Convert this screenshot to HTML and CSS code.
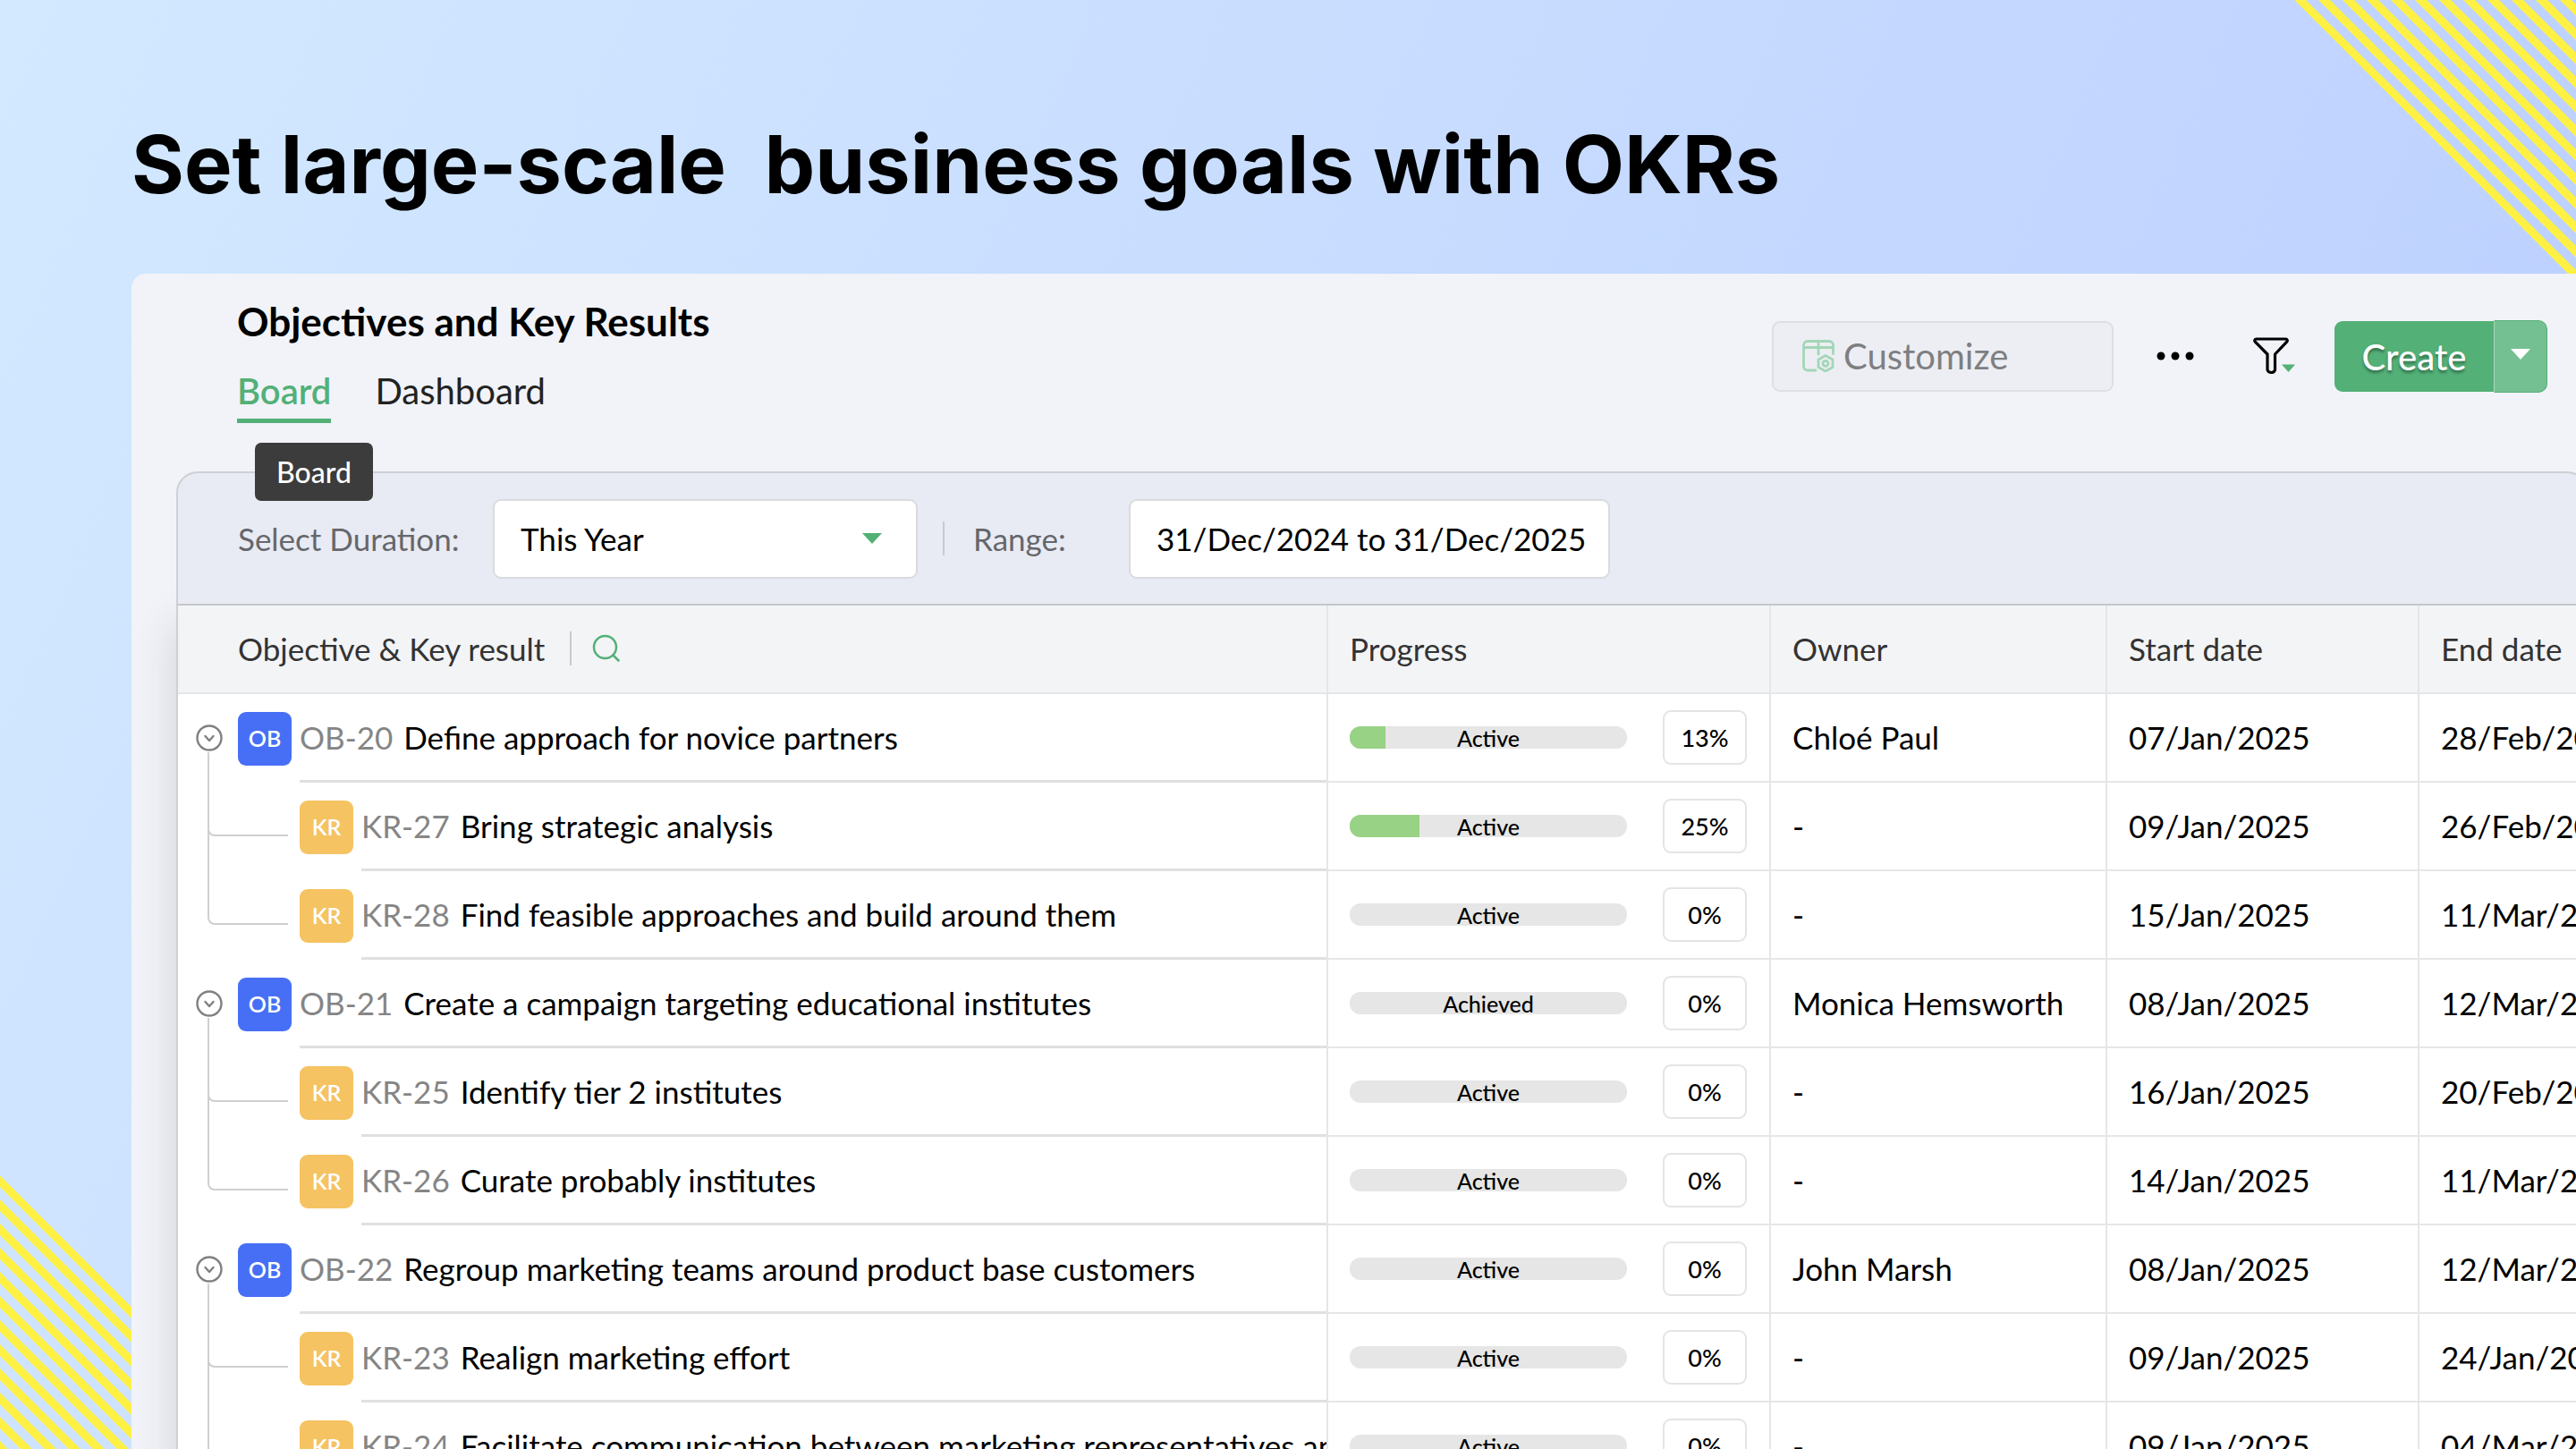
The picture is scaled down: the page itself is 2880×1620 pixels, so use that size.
FILE: index.html
```html
<!DOCTYPE html>
<html lang="en">
<head>
  <meta charset="UTF-8">
  <meta name="viewport" content="width=device-width, initial-scale=1.0">
  <title>Objectives and Key Results</title>
  <link rel="stylesheet" href="styles.css">
</head>
<body>
  <svg class="stripes stripes-top" width="315" height="306" aria-hidden="true">
    <defs>
      <pattern id="stripeTop" width="27" height="27" patternUnits="userSpaceOnUse" patternTransform="skewX(45)">
        <rect width="13" height="27" fill="#fff044"/>
      </pattern>
    </defs>
    <polygon points="0,0 315,0 315,315" fill="url(#stripeTop)"/>
  </svg>
  <svg class="stripes stripes-bottom" width="147" height="306" aria-hidden="true">
    <defs>
      <pattern id="stripeBottom" x="-13" width="27" height="27" patternUnits="userSpaceOnUse" patternTransform="skewX(45)">
        <rect width="13" height="27" fill="#fff044"/>
      </pattern>
    </defs>
    <polygon points="0,0 147,147 147,306 0,306" fill="url(#stripeBottom)"/>
  </svg>

  <h1 class="headline">Set large-scale &nbsp;business goals with OKRs</h1>

  <main class="panel">
    <div class="panel-header">
      <div>
        <h2 class="panel-title">Objectives and Key Results</h2>
        <nav class="tabs">
          <a href="#board" class="tab active">Board<span class="tooltip" role="tooltip">Board</span></a>
          <a href="#dashboard" class="tab">Dashboard</a>
        </nav>
      </div>
      <div class="actions">
        <button class="btn-customize" disabled>
          <svg width="36" height="36" viewBox="0 0 36 36" fill="none" stroke="#a3d6b7" stroke-width="2.8" stroke-linecap="round" stroke-linejoin="round" aria-hidden="true">
            <path d="M15 34H6a4.500 4.500 0 0 1-4.500-4.500V6A4.500 4.500 0 0 1 6 1.500h24A4.500 4.500 0 0 1 34.500 6v9.500M1.500 8.500h33M18 1.500v14.500"/>
            <path d="M26 17.500l8 4.500v8.500l-8 4.500-8-4.500V22z"/>
            <circle cx="26" cy="26.300" r="3"/>
          </svg>
          Customize
        </button>
        <button class="icon-btn btn-more" aria-label="More options">
          <svg width="42" height="10" viewBox="0 0 42 10" aria-hidden="true">
            <circle cx="5" cy="5" r="4.500"/><circle cx="21" cy="5" r="4.500"/><circle cx="37" cy="5" r="4.500"/>
          </svg>
        </button>
        <button class="icon-btn btn-filter" aria-label="Filter">
          <svg width="48" height="42" viewBox="0 0 48 42" aria-hidden="true">
            <path d="M3.500 2h33c1.800 0 2.300 2 1.200 3.200L24.500 19v17.500a4.500 4.500 0 0 1-8.500 0V19L2.300 5.200C1.200 4 1.700 2 3.500 2z" fill="none" stroke="#000" stroke-width="3.2" stroke-linejoin="round"/>
            <path d="M32 30.500h15l-7.500 8.500z" fill="#53b077"/>
          </svg>
        </button>
        <div class="split-btn">
          <button class="btn-create">Create</button>
          <button class="btn-create-menu" aria-label="More create options">
            <svg width="22" height="12" viewBox="0 0 22 12" aria-hidden="true"><path d="M0 0h22L11 12z" fill="#fff"/></svg>
          </button>
        </div>
      </div>
    </div>

    <div class="card">
      <div class="filter-bar">
        <label for="duration" class="filter-label">Select Duration:</label>
        <div class="select-wrap">
          <select id="duration">
            <option>This Year</option>
            <option>This Quarter</option>
            <option>This Month</option>
          </select>
          <svg class="select-arrow" width="22" height="12" viewBox="0 0 22 12" aria-hidden="true"><path d="M0 0h22L11 12z" fill="#53b077"/></svg>
        </div>
        <span class="divider"></span>
        <label for="range" class="filter-label range-label">Range:</label>
        <input id="range" type="text" value="31/Dec/2024 to 31/Dec/2025">
      </div>

      <div class="table-wrap">
        <table class="okr-table">
          <colgroup>
            <col class="col-goal">
            <col class="col-progress">
            <col class="col-owner">
            <col class="col-start">
            <col>
          </colgroup>
          <thead>
            <tr>
              <th>
                <div class="goal-head">
                  Objective &amp; Key result
                  <span class="divider"></span>
                  <button class="icon-btn" aria-label="Search">
                    <svg width="32" height="32" viewBox="0 0 32 32" fill="none" stroke="#53b077" stroke-width="2.500" stroke-linecap="round" aria-hidden="true">
                      <circle cx="14.500" cy="14.500" r="12.500"/><path d="M23.500 23.500l6 6"/>
                    </svg>
                  </button>
                </div>
              </th>
              <th>Progress</th>
              <th>Owner</th>
              <th>Start date</th>
              <th>End date</th>
            </tr>
          </thead>
          <tbody id="okrRows"></tbody>
        </table>
      </div>
    </div>
  </main>

  <script src="script.js"></script>
</body>
</html>
```

FILE: styles.css
```css
/* === GENERAL STYLES === */
* {
  box-sizing: border-box;
}
body {
  margin: 0;
  height: 100vh;
  overflow: hidden;
  display: flex;
  flex-direction: column;
  font-family: Lato, 'Liberation Sans', sans-serif;
  font-size: 35px;
  color: #000;
  background: linear-gradient(114deg, #d3e9ff 0%, #bacdff 100%);
}
button, input, select {
  font: inherit;
  color: inherit;
}
.icon-btn {
  display: flex;
  padding: 0;
  border: none;
  background: none;
}
.divider {
  width: 2px;
  height: 38px;
  background: #c8cacf;
}

/* === BACKDROP === */
.stripes {
  position: absolute;
}
.stripes-top {
  top: 0;
  right: 0;
}
.stripes-bottom {
  bottom: 0;
  left: 0;
}
.headline {
  margin: 0;
  padding: 124px 0 0 147px;
  height: 306px;
  flex-shrink: 0;
  font-family: Inter, 'Liberation Sans', sans-serif;
  font-size: 90px;
  line-height: 120px;
  font-weight: 700;
}

/* === PANEL === */
.panel {
  position: relative;
  flex: 1;
  margin-left: 147px;
  border-top-left-radius: 16px;
  background: #f1f3f8;
  overflow: hidden;
}
.panel-header {
  display: flex;
  justify-content: space-between;
  height: 221px;
  padding: 25px 32px 0 118px;
}
.panel-title {
  margin: 0;
  font-size: 44px;
  line-height: 56px;
  font-weight: 700;
}
.tabs {
  display: flex;
  gap: 49px;
  margin-top: 25px;
}
.tab {
  position: relative;
  padding-bottom: 6px;
  font-size: 40px;
  line-height: 50px;
  color: #222;
  text-decoration: none;
}
.tab.active {
  color: #53b077;
  font-weight: 600;
  border-bottom: 5px solid #53b077;
}
.tooltip {
  position: absolute;
  z-index: 10;
  top: 83px;
  left: 20px;
  padding: 0 24px;
  border-radius: 7px;
  background: rgba(45, 45, 45, 0.92);
  color: #fff;
  font-size: 32px;
  line-height: 65px;
  font-weight: 500;
}

/* === HEADER ACTIONS === */
.actions {
  display: flex;
  align-items: center;
  height: 82px;
  margin-top: 26px;
}
.btn-customize {
  display: flex;
  align-items: center;
  gap: 10px;
  width: 382px;
  height: 79px;
  padding: 0 32px;
  border: 2px solid #dedfe3;
  border-radius: 9px;
  background: #edeef3;
  color: #7e7f82;
  font-size: 40px;
}
.btn-more {
  margin-left: 48px;
}
.btn-filter {
  margin-left: 66px;
}
.split-btn {
  display: flex;
  align-items: center;
  margin-left: 43px;
}
.btn-create {
  width: 178px;
  height: 79px;
  padding: 2px 0 0;
  border: none;
  border-radius: 9px 0 0 9px;
  background: #53b077;
  color: #fff;
  font-size: 40px;
  font-weight: 500;
  text-shadow: 0 3px 3px rgba(0, 0, 0, 0.35);
}
.btn-create-menu {
  display: flex;
  align-items: center;
  justify-content: center;
  width: 60px;
  height: 81px;
  padding: 0 0 4px;
  border: 1px solid #53b077;
  border-left-color: #a9d9bb;
  border-radius: 0 10px 10px 0;
  background: #75c092;
}

/* === FILTER BAR === */
.card {
  margin: 0 -14px 0 50px;
}
.filter-bar {
  position: relative;
  z-index: 1;
  display: flex;
  align-items: center;
  height: 150px;
  padding-left: 67px;
  border: 2px solid #cfd0d5;
  border-bottom-color: #c4c6cb;
  border-radius: 24px 24px 0 0;
  background: #e8ebf3;
}
.filter-label {
  width: 285px;
  color: #66676b;
}
.range-label {
  width: 174px;
}
.select-wrap {
  position: relative;
  margin-right: 28px;
}
.filter-bar select,
.filter-bar input {
  height: 89px;
  margin: 0;
  padding: 0 20px 0 29px;
  border: 2px solid #dadbdf;
  border-radius: 9px;
  background: #fff;
}
.filter-bar select {
  display: block;
  width: 475px;
  appearance: none;
}
.filter-bar input {
  width: 538px;
}
.filter-bar .divider {
  margin-right: 32px;
}
.select-arrow {
  position: absolute;
  top: 38px;
  right: 40px;
}

/* === TABLE === */
.table-wrap {
  border-left: 2px solid #cfd0d5;
  background: #fff;
  box-shadow: 0 20px 44px rgba(40, 45, 60, 0.16);
}
.okr-table {
  width: 100%;
  table-layout: fixed;
  border-collapse: separate;
  border-spacing: 0;
}
.col-goal {
  width: 1286px;
}
.col-progress {
  width: 495px;
}
.col-owner {
  width: 376px;
}
.col-start {
  width: 349px;
}
.okr-table th,
.okr-table td {
  height: 99px;
  padding: 0 0 2px 24px;
  border-right: 2px solid #e5e6e8;
  border-bottom: 2px solid #e5e6e8;
  text-align: left;
  font-weight: 400;
  white-space: nowrap;
}
.okr-table th {
  background: #f3f4f6;
  color: #333;
}
.okr-table th:first-child {
  padding-left: 67px;
}
.okr-table td.goal-cell {
  padding: 0;
  border-bottom: none;
}
.okr-table td.progress-cell {
  padding-bottom: 0;
}
.goal-head {
  display: flex;
  align-items: center;
}
.goal-head .divider {
  margin: 0 23px 0 28px;
}

/* === GOAL TREE === */
.goal {
  position: relative;
  display: flex;
  align-items: center;
  height: 99px;
  padding-left: 20px;
}
.goal.key-result {
  padding-left: 136px;
}
/* elbow that ties a key result to its objective */
.goal.key-result::before {
  content: '';
  position: absolute;
  left: 33px;
  top: -34px;
  width: 88px;
  height: 92px;
  border-left: 2px solid #cfcfcf;
  border-bottom: 2px solid #cfcfcf;
  border-bottom-left-radius: 8px;
}
.goal.key-result.next::before {
  top: -50px;
  height: 108px;
}
.toggle {
  margin-right: 17px;
}
.badge {
  width: 60px;
  height: 60px;
  margin-right: 9px;
  border-radius: 9px;
  background: #476ff6;
  color: #fff;
  font-size: 25px;
  line-height: 59px;
  font-weight: 600;
  text-align: center;
}
.key-result .badge {
  background: #f5c362;
}
.goal-text {
  flex: 1;
  min-width: 0;
  height: 99px;
  line-height: 96px;
  border-bottom: 3px solid #e0e0e0;
  overflow: hidden;
}
.goal-id {
  margin-right: 12px;
  color: #858585;
}

/* === PROGRESS === */
.progress {
  display: flex;
  align-items: center;
  gap: 40px;
}
.bar {
  position: relative;
  width: 310px;
  height: 25px;
  border-radius: 12px;
  background: #e6e6e6;
  font-size: 25px;
  line-height: 26px;
  text-align: center;
}
.bar-fill {
  position: absolute;
  top: 0;
  left: 0;
  height: 25px;
  border-radius: 12px 0 0 12px;
  background: #98d284;
}
.bar-status {
  position: relative;
  font-weight: 500;
}
.percent {
  width: 94px;
  height: 61px;
  border: 2px solid #e4e4e4;
  border-radius: 9px;
  font-size: 27px;
  line-height: 57px;
  font-weight: 500;
  text-align: center;
}
```

FILE: script.js
```js
const rows = [
  { id: 'OB-20', name: 'Define approach for novice partners', status: 'Active', progress: 13, owner: 'Chloé Paul', start: '07/Jan/2025', end: '28/Feb/2025' },
  { id: 'KR-27', name: 'Bring strategic analysis', status: 'Active', progress: 25, owner: '-', start: '09/Jan/2025', end: '26/Feb/2025' },
  { id: 'KR-28', name: 'Find feasible approaches and build around them', status: 'Active', progress: 0, owner: '-', start: '15/Jan/2025', end: '11/Mar/2025' },
  { id: 'OB-21', name: 'Create a campaign targeting educational institutes', status: 'Achieved', progress: 0, owner: 'Monica Hemsworth', start: '08/Jan/2025', end: '12/Mar/2025' },
  { id: 'KR-25', name: 'Identify tier 2 institutes', status: 'Active', progress: 0, owner: '-', start: '16/Jan/2025', end: '20/Feb/2025' },
  { id: 'KR-26', name: 'Curate probably institutes', status: 'Active', progress: 0, owner: '-', start: '14/Jan/2025', end: '11/Mar/2025' },
  { id: 'OB-22', name: 'Regroup marketing teams around product base customers', status: 'Active', progress: 0, owner: 'John Marsh', start: '08/Jan/2025', end: '12/Mar/2025' },
  { id: 'KR-23', name: 'Realign marketing effort', status: 'Active', progress: 0, owner: '-', start: '09/Jan/2025', end: '24/Jan/2025' },
  { id: 'KR-24', name: 'Facilitate communication between marketing representatives and', status: 'Active', progress: 0, owner: '-', start: '09/Jan/2025', end: '04/Mar/2025' }
];

const toggle = `
  <button class="icon-btn toggle" aria-label="Collapse">
    <svg width="30" height="32" viewBox="0 0 30 32" fill="none" stroke="#808080" stroke-width="2.4" stroke-linecap="round" stroke-linejoin="round" aria-hidden="true">
      <circle cx="15" cy="15" r="13.5"/><path d="M10.500 13l4.500 5 4.500-5"/>
    </svg>
  </button>`;

document.getElementById('okrRows').innerHTML = rows.map((row, i) => {
  const isKey = row.id.startsWith('KR');
  const follows = isKey && rows[i - 1].id.startsWith('KR');
  return `
    <tr>
      <td class="goal-cell">
        <div class="goal${isKey ? ' key-result' : ''}${follows ? ' next' : ''}">
          ${isKey ? '' : toggle}
          <span class="badge">${row.id.slice(0, 2)}</span>
          <div class="goal-text"><span class="goal-id">${row.id}</span>${row.name}</div>
        </div>
      </td>
      <td class="progress-cell">
        <div class="progress">
          <div class="bar">
            <div class="bar-fill" style="width: ${row.progress}%"></div>
            <span class="bar-status">${row.status}</span>
          </div>
          <div class="percent">${row.progress}%</div>
        </div>
      </td>
      <td>${row.owner}</td>
      <td>${row.start}</td>
      <td>${row.end}</td>
    </tr>`;
}).join('');
```
